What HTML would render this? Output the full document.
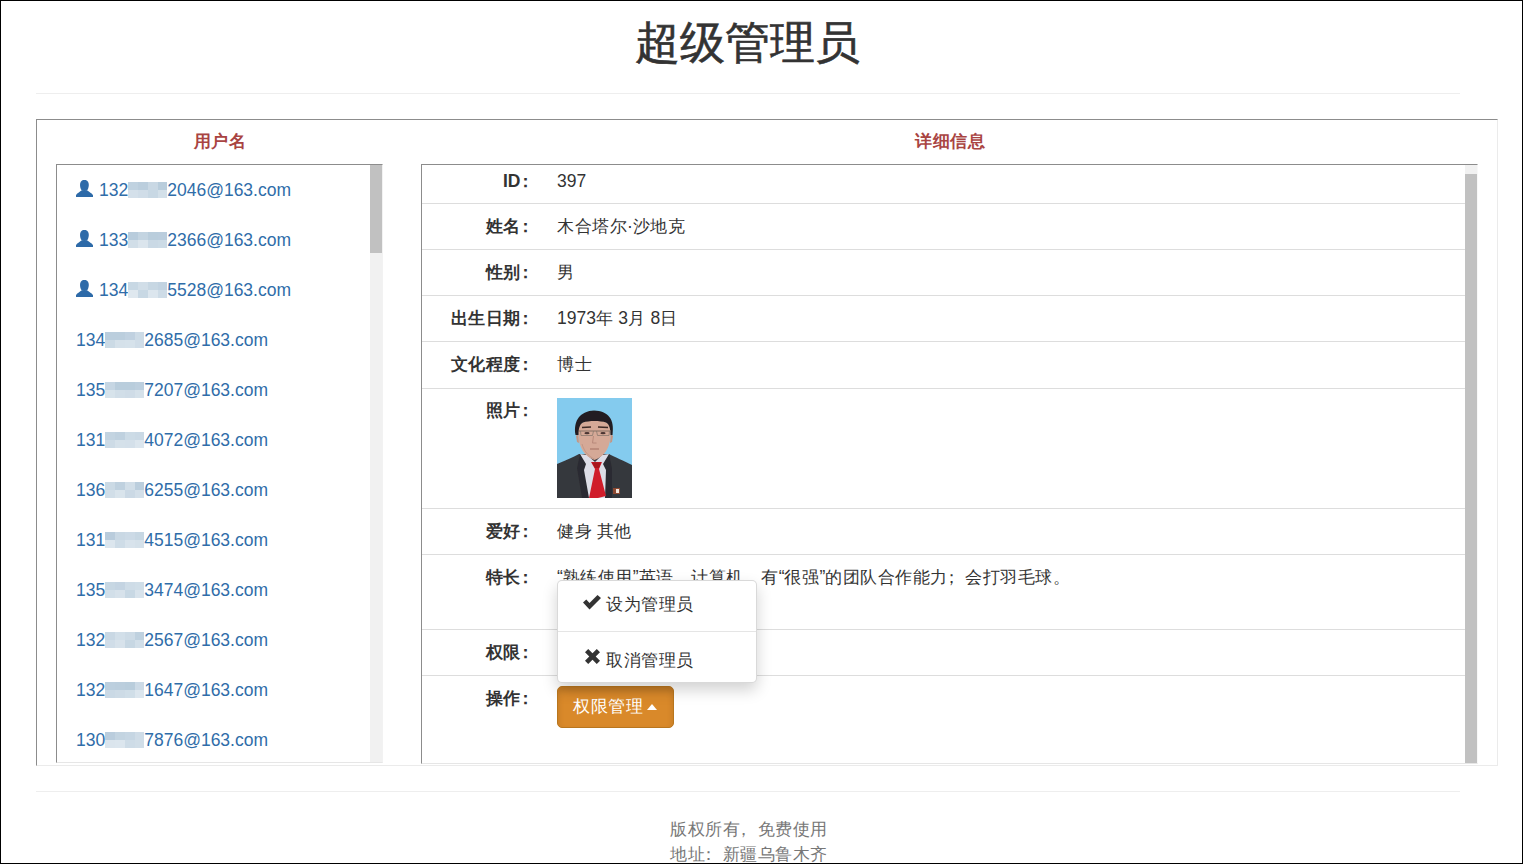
<!DOCTYPE html>
<html><head><meta charset="utf-8">
<style>
*{box-sizing:border-box;margin:0;padding:0}
html,body{width:1523px;height:864px;overflow:hidden;background:#fff}
body{position:relative;font-family:"Liberation Sans",sans-serif;font-size:17.5px;line-height:25px;color:#333}
.frame{position:absolute;left:0;top:0;width:1523px;height:864px;border:1px solid #000;z-index:50;pointer-events:none}
.c{font-size:17px;letter-spacing:.5px}
.abs{position:absolute}
h1{position:absolute;left:0;width:1495px;top:18px;text-align:center;font-size:45px;font-weight:normal;line-height:50px;color:#333;-webkit-text-stroke:0.6px #333}
.hr{position:absolute;left:36px;width:1424px;height:1px;background:#eee}
.outer{position:absolute;left:36px;top:119px;width:1462px;height:647px;border-style:solid;border-width:1px;border-color:#8c8c8c #ebebeb #ebebeb #8c8c8c}
.hd{position:absolute;top:129px;font-weight:bold;color:#a94442;text-align:center;white-space:nowrap}
.list{position:absolute;left:56px;top:164px;width:327px;height:599px;border-style:solid;border-width:1px;border-color:#8c8c8c #f2f2f2 #e6e6e6 #8c8c8c;overflow:hidden}
.sb{position:absolute;background:#f1f1f1}
.thumb{position:absolute;background:#c1c1c1}
.item{position:absolute;left:19px;color:#2f6da9;white-space:nowrap}
.uic{display:inline-block;vertical-align:top;margin-top:2px;margin-right:6px;fill:#2d6aa8}
.blur{display:inline-block;vertical-align:top;width:39px;height:16px;margin-top:4px;background:
linear-gradient(90deg,#bed2e1 0 13px,#c9d9e5 13px 26px,#d3e0ea 26px 39px) top/39px 8px no-repeat,
linear-gradient(90deg,#d3e1eb 0 13px,#dbe6ee 13px 26px,#d0dee9 26px 39px) bottom/39px 8px no-repeat}
.detail{position:absolute;left:421px;top:164px;width:1057px;height:600px;border-style:solid;border-width:1px;border-color:#8c8c8c #f8f8f8 #e6e6e6 #8c8c8c;overflow:hidden}
.sep{position:absolute;left:0;width:1043px;height:1px;background:#ddd}
.lab{position:absolute;right:943px;font-weight:bold;white-space:nowrap;text-align:right}
.col{margin-left:-4px}
.p{position:relative;left:-5px}
.val{position:absolute;left:135px;white-space:nowrap}
.dd{position:absolute;left:557px;top:580px;width:200px;height:103px;background:#fff;border:1px solid rgba(0,0,0,.15);border-radius:5px;box-shadow:0 7px 15px rgba(0,0,0,.18);z-index:5}
.di{position:absolute;left:48px;white-space:nowrap;color:#333}
.gi{position:absolute;left:-23px;top:3px}
.dsep{position:absolute;left:0;width:198px;height:1px;background:#e5e5e5}
.btn{position:absolute;left:557px;top:686px;width:117px;height:42px;background:#d9892a;border:1px solid #b9761e;border-radius:5px;box-shadow:inset 0 4px 6px rgba(0,0,0,.125);color:#fff;padding:7px 0 0 15px;white-space:nowrap;z-index:4}
.caret{display:inline-block;width:0;height:0;margin-left:4px;vertical-align:middle;border-left:5.5px solid transparent;border-right:5.5px solid transparent;border-bottom:6px solid #fff;position:relative;top:0px}
.foot{position:absolute;left:1px;width:1496px;text-align:center;color:#777}
</style></head><body>
<div class="frame"></div>
<h1>超级管理员</h1>
<div class="hr" style="top:93px"></div>

<div class="outer"></div>
<div class="hd" style="left:170px;width:100px"><span class="c">用户名</span></div>
<div class="hd" style="left:900px;width:100px"><span class="c">详细信息</span></div>

<div class="list">
  <div class="sb" style="left:313px;top:0;width:12px;height:597px"></div>
  <div class="thumb" style="left:313px;top:0;width:12px;height:88px"></div>
  <div class="item" style="top:13px"><svg class="uic" width="17" height="17" viewBox="0 0 17 17"><path d="M8.4 -0.2 C11.2 -0.2 12.8 2 12.8 5 C12.8 8 11.5 10 10.8 10.6 L8.4 11 L6 10.6 C5.3 10 4 8 4 5 C4 2 5.6 -0.2 8.4 -0.2Z"/><path d="M5.8 10.2 L11 10.2 C12.5 11.5 16.6 13.6 17 15.2 L17 17 L0 17 L0 15.2 C0.4 13.6 4.3 11.5 5.8 10.2Z"/></svg>132<span class="blur" style="background:linear-gradient(90deg,#c0d2e0 0 10px,#bbcedd 10px 20px,#c9d8e4 20px 30px,#b9cddc 30px 39px) top/39px 8px no-repeat,linear-gradient(90deg,#d4e0ea 0 10px,#d0dde8 10px 20px,#c8d8e4 20px 30px,#d3e0e9 30px 39px) bottom/39px 8px no-repeat"></span>2046@163.com</div>
  <div class="item" style="top:63px"><svg class="uic" width="17" height="17" viewBox="0 0 17 17"><path d="M8.4 -0.2 C11.2 -0.2 12.8 2 12.8 5 C12.8 8 11.5 10 10.8 10.6 L8.4 11 L6 10.6 C5.3 10 4 8 4 5 C4 2 5.6 -0.2 8.4 -0.2Z"/><path d="M5.8 10.2 L11 10.2 C12.5 11.5 16.6 13.6 17 15.2 L17 17 L0 17 L0 15.2 C0.4 13.6 4.3 11.5 5.8 10.2Z"/></svg>133<span class="blur" style="background:linear-gradient(90deg,#b8ccdc 0 10px,#c3d4e1 10px 20px,#b9cddc 20px 30px,#bacddd 30px 39px) top/39px 8px no-repeat,linear-gradient(90deg,#d1dee8 0 10px,#dbe5ed 10px 20px,#cad9e5 20px 30px,#ccdbe6 30px 39px) bottom/39px 8px no-repeat"></span>2366@163.com</div>
  <div class="item" style="top:113px"><svg class="uic" width="17" height="17" viewBox="0 0 17 17"><path d="M8.4 -0.2 C11.2 -0.2 12.8 2 12.8 5 C12.8 8 11.5 10 10.8 10.6 L8.4 11 L6 10.6 C5.3 10 4 8 4 5 C4 2 5.6 -0.2 8.4 -0.2Z"/><path d="M5.8 10.2 L11 10.2 C12.5 11.5 16.6 13.6 17 15.2 L17 17 L0 17 L0 15.2 C0.4 13.6 4.3 11.5 5.8 10.2Z"/></svg>134<span class="blur" style="background:linear-gradient(90deg,#c8d8e4 0 10px,#d1dee8 10px 20px,#c7d7e3 20px 30px,#c2d3e1 30px 39px) top/39px 8px no-repeat,linear-gradient(90deg,#dfe8ef 0 10px,#c8d8e4 10px 20px,#dce6ee 20px 30px,#cedce7 30px 39px) bottom/39px 8px no-repeat"></span>5528@163.com</div>
  <div class="item" style="top:163px">134<span class="blur" style="background:linear-gradient(90deg,#bbcedd 0 10px,#bbcedd 10px 20px,#c0d1e0 20px 30px,#cddbe6 30px 39px) top/39px 8px no-repeat,linear-gradient(90deg,#cbdae5 0 10px,#d5e1ea 10px 20px,#d6e2eb 20px 30px,#d0dde8 30px 39px) bottom/39px 8px no-repeat"></span>2685@163.com</div>
  <div class="item" style="top:213px">135<span class="blur" style="background:linear-gradient(90deg,#c6d6e3 0 10px,#b9cddc 10px 20px,#b9cddc 20px 30px,#bdcfde 30px 39px) top/39px 8px no-repeat,linear-gradient(90deg,#d7e3eb 0 10px,#d1dee8 10px 20px,#cfdce7 20px 30px,#d5e1ea 30px 39px) bottom/39px 8px no-repeat"></span>7207@163.com</div>
  <div class="item" style="top:263px">131<span class="blur" style="background:linear-gradient(90deg,#c3d4e1 0 10px,#bfd1df 10px 20px,#ccdbe6 20px 30px,#cad9e5 30px 39px) top/39px 8px no-repeat,linear-gradient(90deg,#cddbe6 0 10px,#d5e1ea 10px 20px,#d4e0ea 20px 30px,#dce6ee 30px 39px) bottom/39px 8px no-repeat"></span>4072@163.com</div>
  <div class="item" style="top:313px">136<span class="blur" style="background:linear-gradient(90deg,#cbdae5 0 10px,#bfd1df 10px 20px,#d1dee8 20px 30px,#bbcedd 30px 39px) top/39px 8px no-repeat,linear-gradient(90deg,#d1dee8 0 10px,#d9e4ec 10px 20px,#cbd9e5 20px 30px,#d3dfe9 30px 39px) bottom/39px 8px no-repeat"></span>6255@163.com</div>
  <div class="item" style="top:363px">131<span class="blur" style="background:linear-gradient(90deg,#b9ccdc 0 10px,#c9d8e4 10px 20px,#ccdae6 20px 30px,#c7d7e3 30px 39px) top/39px 8px no-repeat,linear-gradient(90deg,#dce6ee 0 10px,#cedce7 10px 20px,#d8e3ec 20px 30px,#d5e1ea 30px 39px) bottom/39px 8px no-repeat"></span>4515@163.com</div>
  <div class="item" style="top:413px">135<span class="blur" style="background:linear-gradient(90deg,#c7d7e3 0 10px,#c4d4e2 10px 20px,#cedce7 20px 30px,#d0dee8 30px 39px) top/39px 8px no-repeat,linear-gradient(90deg,#d2dfe9 0 10px,#d7e2eb 10px 20px,#c8d8e4 20px 30px,#d8e3ec 30px 39px) bottom/39px 8px no-repeat"></span>3474@163.com</div>
  <div class="item" style="top:463px">132<span class="blur" style="background:linear-gradient(90deg,#c9d8e4 0 10px,#d2dfe9 10px 20px,#cddbe6 20px 30px,#bfd1df 30px 39px) top/39px 8px no-repeat,linear-gradient(90deg,#d0dde8 0 10px,#d7e2eb 10px 20px,#c7d7e3 20px 30px,#d2dfe9 30px 39px) bottom/39px 8px no-repeat"></span>2567@163.com</div>
  <div class="item" style="top:513px">132<span class="blur" style="background:linear-gradient(90deg,#bccfde 0 10px,#bbcedd 10px 20px,#b9cddc 20px 30px,#ccdae6 30px 39px) top/39px 8px no-repeat,linear-gradient(90deg,#cad9e5 0 10px,#cddbe6 10px 20px,#d0dee8 20px 30px,#dce6ee 30px 39px) bottom/39px 8px no-repeat"></span>1647@163.com</div>
  <div class="item" style="top:563px">130<span class="blur" style="background:linear-gradient(90deg,#bacddd 0 10px,#c3d4e1 10px 20px,#c6d6e3 20px 30px,#cfdce7 30px 39px) top/39px 8px no-repeat,linear-gradient(90deg,#dbe5ed 0 10px,#dce6ee 10px 20px,#cedce7 20px 30px,#d1dee8 30px 39px) bottom/39px 8px no-repeat"></span>7876@163.com</div>
</div>

<div class="detail">
  <div class="sb" style="left:1043px;top:0;width:12px;height:598px"></div>
  <div class="thumb" style="left:1043px;top:9px;width:12px;height:589px"></div>
  <div class="sep" style="top:38px"></div>
  <div class="sep" style="top:84px"></div>
  <div class="sep" style="top:130px"></div>
  <div class="sep" style="top:176px"></div>
  <div class="sep" style="top:223px"></div>
  <div class="sep" style="top:343px"></div>
  <div class="sep" style="top:389px"></div>
  <div class="sep" style="top:464px"></div>
  <div class="sep" style="top:510px"></div>
  <svg class="abs" style="left:135px;top:233px" width="75" height="100" viewBox="0 0 75 100">
    <defs><filter id="bl" x="-10%" y="-10%" width="120%" height="120%"><feGaussianBlur stdDeviation="0.6"/></filter></defs>
    <rect width="75" height="100" fill="#84cbee"/>
    <g filter="url(#bl)">
    <path d="M29 52 L29 64 L46 64 L46 52Z" fill="#c39483"/>
    <path d="M0 66 C8 63 16 59 22 56 L52 56 C58 59 67 63 75 67 L75 100 L0 100Z" fill="#36373c"/>
    <path d="M23 56 L30 57 L38 64 L45 57 L52 56 L51 72 L50 100 L29 100 L25 72Z" fill="#dddde7"/>
    <path d="M23 56 L29 66 L27 72 L32 100 L25 100 L20 70Z" fill="#2b2c31"/>
    <path d="M52 56 L46 66 L49 72 L48 100 L55 100 L55 70Z" fill="#2b2c31"/>
    <path d="M34 64 L45 64 L42 71 L49 98 L41 100 L32 100 L38 71Z" fill="#d01d2b"/>
    <path d="M35 64.5 L44 64.5 L42 70 L38 70Z" fill="#a8141e"/>
    <path d="M21 30 C21 45 24 57 37.5 62 C51 57 54 45 54 30 C53 25 47 22 37.5 22 C28 22 22 25 21 30Z" fill="#d5a997"/>
    <path d="M19 38 L21 36 L22 45 L20 44Z M56 38 L54 36 L53 45 L55 44Z" fill="#c59684"/>
    <path d="M18.5 37 C16 22 24 13 37 12.5 C51 13 58 21 55.5 37 L53.5 37 C53.5 30 52 26 49 24.5 C43 22.5 32 22.5 26 24.5 C23 26 21.5 30 21.5 37Z" fill="#241f21"/>
    <path d="M25 29.5 L34 29 M41 29 L51 29.5" stroke="#3d2a26" stroke-width="1.6"/>
    <path d="M22 33 L54 33" stroke="#7a6a5e" stroke-width="0.9"/>
    <path d="M23.5 33 L24 37.5 L35.5 37.5 L36.5 33 M39.5 33 L40.5 37.5 L52 37.5 L52.5 33" fill="none" stroke="#8a7a6e" stroke-width="0.8"/>
    <ellipse cx="30" cy="35.2" rx="2.6" ry="1.1" fill="#4a3430"/>
    <ellipse cx="46" cy="35.2" rx="2.6" ry="1.1" fill="#4a3430"/>
    <path d="M36.5 38 L35.5 45 L39.5 45" fill="none" stroke="#b8897a" stroke-width="1"/>
    <path d="M33 51 L42 51" stroke="#a87567" stroke-width="1.1"/>
    <path d="M25 46 C27 53 31 58 37.5 61" fill="none" stroke="#c49786" stroke-width="1"/>
    <path d="M56 90 L63 90 L63 96 L56 96Z" fill="#8d4a32"/>
    <path d="M59 91 L62 91 L62 95 L59 95Z" fill="#f2e6dc"/>
    </g>
  </svg>
  <div class="lab" style="top:4px">ID<span class="col"><span class="c">：</span></span></div>
  <div class="val" style="top:4px">397</div>
  <div class="lab" style="top:49px"><span class="c">姓名</span><span class="col"><span class="c">：</span></span></div>
  <div class="val" style="top:49px"><span class="c">木合塔尔</span>·<span class="c">沙地克</span></div>
  <div class="lab" style="top:95px"><span class="c">性别</span><span class="col"><span class="c">：</span></span></div>
  <div class="val" style="top:95px"><span class="c">男</span></div>
  <div class="lab" style="top:141px"><span class="c">出生日期</span><span class="col"><span class="c">：</span></span></div>
  <div class="val" style="top:141px">1973<span class="c">年</span> 3<span class="c">月</span> 8<span class="c">日</span></div>
  <div class="lab" style="top:187px"><span class="c">文化程度</span><span class="col"><span class="c">：</span></span></div>
  <div class="val" style="top:187px"><span class="c">博士</span></div>
  <div class="lab" style="top:233px"><span class="c">照片</span><span class="col"><span class="c">：</span></span></div>
  <div class="lab" style="top:354px"><span class="c">爱好</span><span class="col"><span class="c">：</span></span></div>
  <div class="val" style="top:354px"><span class="c">健身</span> <span class="c">其他</span></div>
  <div class="lab" style="top:400px"><span class="c">特长</span><span class="col"><span class="c">：</span></span></div>
  <div class="val" style="top:400px">“<span class="c">熟练使用</span>”<span class="c">英语<span class="p">，</span>计算机<span class="p">，</span>有</span>“<span class="c">很强</span>”<span class="c">的团队合作能力<span class="p">；</span>会打羽毛球。</span></div>
  <div class="lab" style="top:475px"><span class="c">权限</span><span class="col"><span class="c">：</span></span></div>
  <div class="val" style="top:475px"><span class="c">管理员</span></div>
  <div class="lab" style="top:521px"><span class="c">操作</span><span class="col"><span class="c">：</span></span></div>
</div>

<div class="dd">
  <div class="di" style="top:11px"><svg class="gi" width="18" height="15" viewBox="0 0 18 15"><path d="M0 7.5 L3.3 4.5 L6.5 8 L14.5 0 L18 3 L6.5 14.5Z" fill="#333"/></svg><span class="c">设为管理员</span></div>
  <div class="dsep" style="top:50px"></div>
  <div class="di" style="top:67px"><svg class="gi" width="15" height="15" viewBox="0 0 14 14" style="left:-21px;top:1px"><path d="M0 3 L3 0 L7 4 L11 0 L14 3 L10 7 L14 11 L11 14 L7 10 L3 14 L0 11 L4 7Z" fill="#333"/></svg><span class="c">取消管理员</span></div>
</div>
<div class="btn"><span class="c">权限管理</span><span class="caret"></span></div>
<div class="hr" style="top:791px"></div>
<div class="foot" style="top:817px"><span class="c">版权所有<span class="p">，</span>免费使用</span></div>
<div class="foot" style="top:842px"><span class="c">地址<span class="p">：</span>新疆乌鲁木齐</span></div>
</body></html>
